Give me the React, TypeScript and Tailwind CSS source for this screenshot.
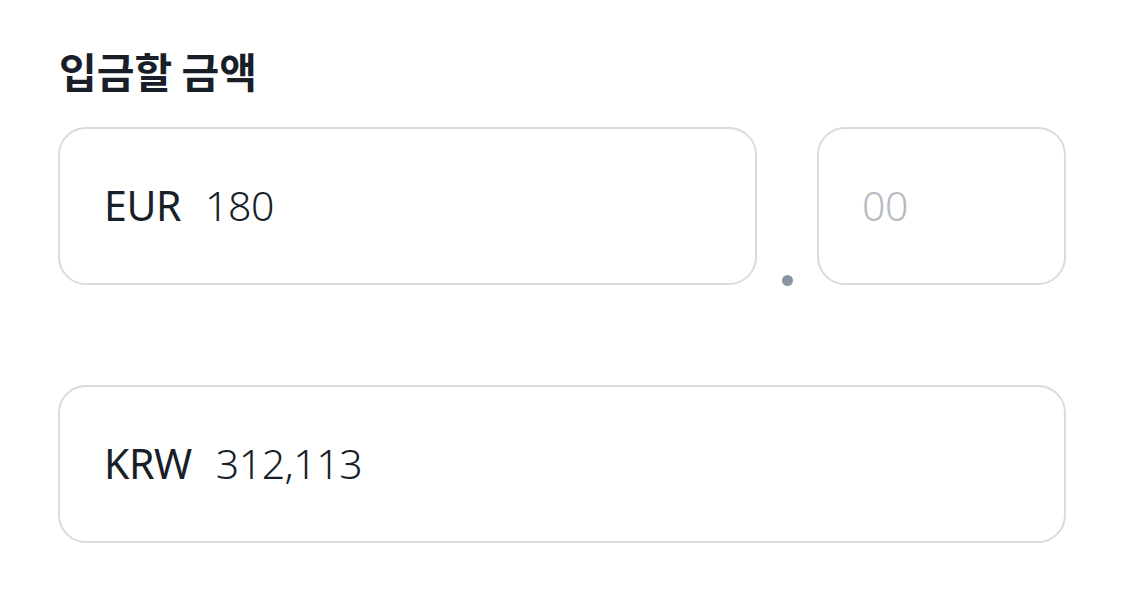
import React from 'react';

const font = { fontFamily: '"Noto Sans", "Noto Sans CJK KR", sans-serif' };

function AmountBox({ code, value, className }: { code: string; value: string; className?: string }) {
  return (
    <div
      className={`h-[158px] rounded-[28px] border-2 border-[#dadbde] bg-white flex items-center pl-[44px] ${className ?? ''}`}
    >
      <span className="text-[41px] font-[450] text-[#191f28] tracking-[-0.4px]">{code}</span>
      <span className="ml-[24px] text-[41px] font-light text-[#191f28] tracking-[-0.5px]">{value}</span>
    </div>
  );
}

export default function App() {
  return (
    <div className="w-[1125px] h-[613px] bg-white overflow-hidden" style={font}>
      <div className="pl-[58px] pr-[59px] pt-[38px]">
        <h2
          className="pl-[1px] text-[41px] font-bold leading-[64px] text-[#191f28] tracking-[0px]"
          style={{ fontFamily: '"Noto Sans CJK KR", sans-serif' }}
        >
          입금할 금액
        </h2>

        <div className="mt-[25px] flex items-end">
          <AmountBox code="EUR" value="180" className="w-[699px]" />
          <div className="w-[60px] flex justify-center">
            <span className="mb-[-1px] block w-[11px] h-[11px] rounded-full bg-[#8b95a1]" />
          </div>
          <div className="w-[249px] h-[158px] rounded-[28px] border-2 border-[#dadbde] bg-white flex items-center pl-[43px]">
            <span className="text-[41px] font-light text-[#b5bac1] tracking-[-0.5px]">00</span>
          </div>
        </div>

        <AmountBox code="KRW" value="312,113" className="mt-[100px] w-full" />
      </div>
    </div>
  );
}
